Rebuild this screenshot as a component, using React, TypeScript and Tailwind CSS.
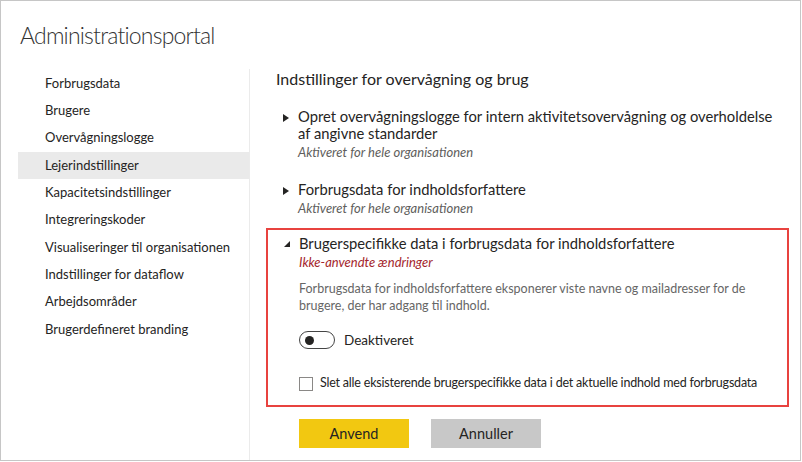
const navItems = [
  "Forbrugsdata",
  "Brugere",
  "Overvågningslogge",
  "Lejerindstillinger",
  "Kapacitetsindstillinger",
  "Integreringskoder",
  "Visualiseringer til organisationen",
  "Indstillinger for dataflow",
  "Arbejdsområder",
  "Brugerdefineret branding",
];

function Caret({ open = false }: { open?: boolean }) {
  if (open) {
    return (
      <svg width="8" height="8" viewBox="0 0 8 8" className="shrink-0">
        <path d="M7 1 L7 7 L1 7 Z" fill="#252423" />
      </svg>
    );
  }
  return (
    <svg width="8" height="10" viewBox="0 0 8 10" className="shrink-0">
      <path d="M1 1 L7 5 L1 9 Z" fill="#252423" />
    </svg>
  );
}

function Setting({ title, sub }: { title: React.ReactNode; sub: string }) {
  return (
    <div className="flex">
      <div className="w-[32px] pl-[16px] pt-[5px]">
        <Caret />
      </div>
      <div>
        <div className="text-[14.75px] leading-[17px] text-[#252423] whitespace-nowrap">{title}</div>
        <div className="mt-[3px] text-[13px] leading-[15px] italic text-[#605e5c]">{sub}</div>
      </div>
    </div>
  );
}

export default function App() {
  return (
    <div
      className="w-[801px] h-[461px] border border-[#c6c6c6] bg-white flex flex-col overflow-hidden"
      style={{ fontFamily: 'Lato, "Open Sans", sans-serif' }}
    >
      <div className="shrink-0 pl-[19px] pt-[18px] h-[68px] text-[23px] tracking-[-0.8px] leading-[32px] font-light text-[#333]">
        Administrationsportal
      </div>
      <div className="flex flex-1 min-h-0">
        <nav className="w-[249px] shrink-0 pl-[17px] border-r border-[#ebebeb] pt-[1px]">
          {navItems.map((item) => (
            <div
              key={item}
              className={`h-[27.3px] flex items-center pl-[27px] text-[13px] text-[#252423] ${
                item === "Lejerindstillinger" ? "bg-[#eaeaea]" : ""
              }`}
            >
              {item}
            </div>
          ))}
        </nav>
        <main className="flex-1 pl-[16px]">
          <h2 className="pl-[10px] text-[16px] leading-[20px] text-[#252423]">
            Indstillinger for overvågning og brug
          </h2>
          <div className="mt-[19px] flex flex-col gap-[21px]">
            <Setting
              title={
                <>
                  Opret overvågningslogge for intern aktivitetsovervågning og overholdelse
                  <br />
                  af angivne standarder
                </>
              }
              sub="Aktiveret for hele organisationen"
            />
            <Setting title="Forbrugsdata for indholdsforfattere" sub="Aktiveret for hele organisationen" />
          </div>
          <section className="w-[523px] mt-[12px] border-[2.5px] border-[#e8433f] pt-[5px] pb-[12px]">
            <div className="flex">
              <div className="w-[31px] pl-[15px] pt-[5px]">
                <Caret open />
              </div>
              <div className="flex-1">
                <div className="text-[14.75px] leading-[17px] text-[#252423]">
                  Brugerspecifikke data i forbrugsdata for indholdsforfattere
                </div>
                <div className="mt-[3px] text-[13px] leading-[15px] italic text-[#a4262c]">
                  Ikke-anvendte ændringer
                </div>
                <p className="mt-[10px] text-[12.5px] leading-[17px] text-[#666] whitespace-nowrap">
                  Forbrugsdata for indholdsforfattere eksponerer viste navne og mailadresser for de
                  <br />
                  brugere, der har adgang til indhold.
                </p>
                <div className="mt-[16px] flex items-center gap-[9px]">
                  <div className="w-[36px] h-[18px] rounded-full border border-[#444] flex items-center pl-[5px]">
                    <div className="w-[9px] h-[9px] rounded-full bg-[#252423]" />
                  </div>
                  <span className="text-[13.5px] text-[#252423]">Deaktiveret</span>
                </div>
                <label className="mt-[24px] flex items-center gap-[7px]">
                  <span className="w-[14px] h-[14px] border border-[#8a8886] bg-white" />
                  <span className="text-[12.5px] tracking-[-0.2px] text-[#252423] whitespace-nowrap">
                    Slet alle eksisterende brugerspecifikke data i det aktuelle indhold med forbrugsdata
                  </span>
                </label>
              </div>
            </div>
          </section>
          <div className="mt-[12px] pl-[33px] flex gap-[22px]">
            <button className="w-[110px] h-[29px] bg-[#f2c811] text-[14.5px] text-[#252423]">Anvend</button>
            <button className="w-[110px] h-[29px] bg-[#c8c8c8] text-[14.5px] text-[#252423]">Annuller</button>
          </div>
        </main>
      </div>
    </div>
  );
}
